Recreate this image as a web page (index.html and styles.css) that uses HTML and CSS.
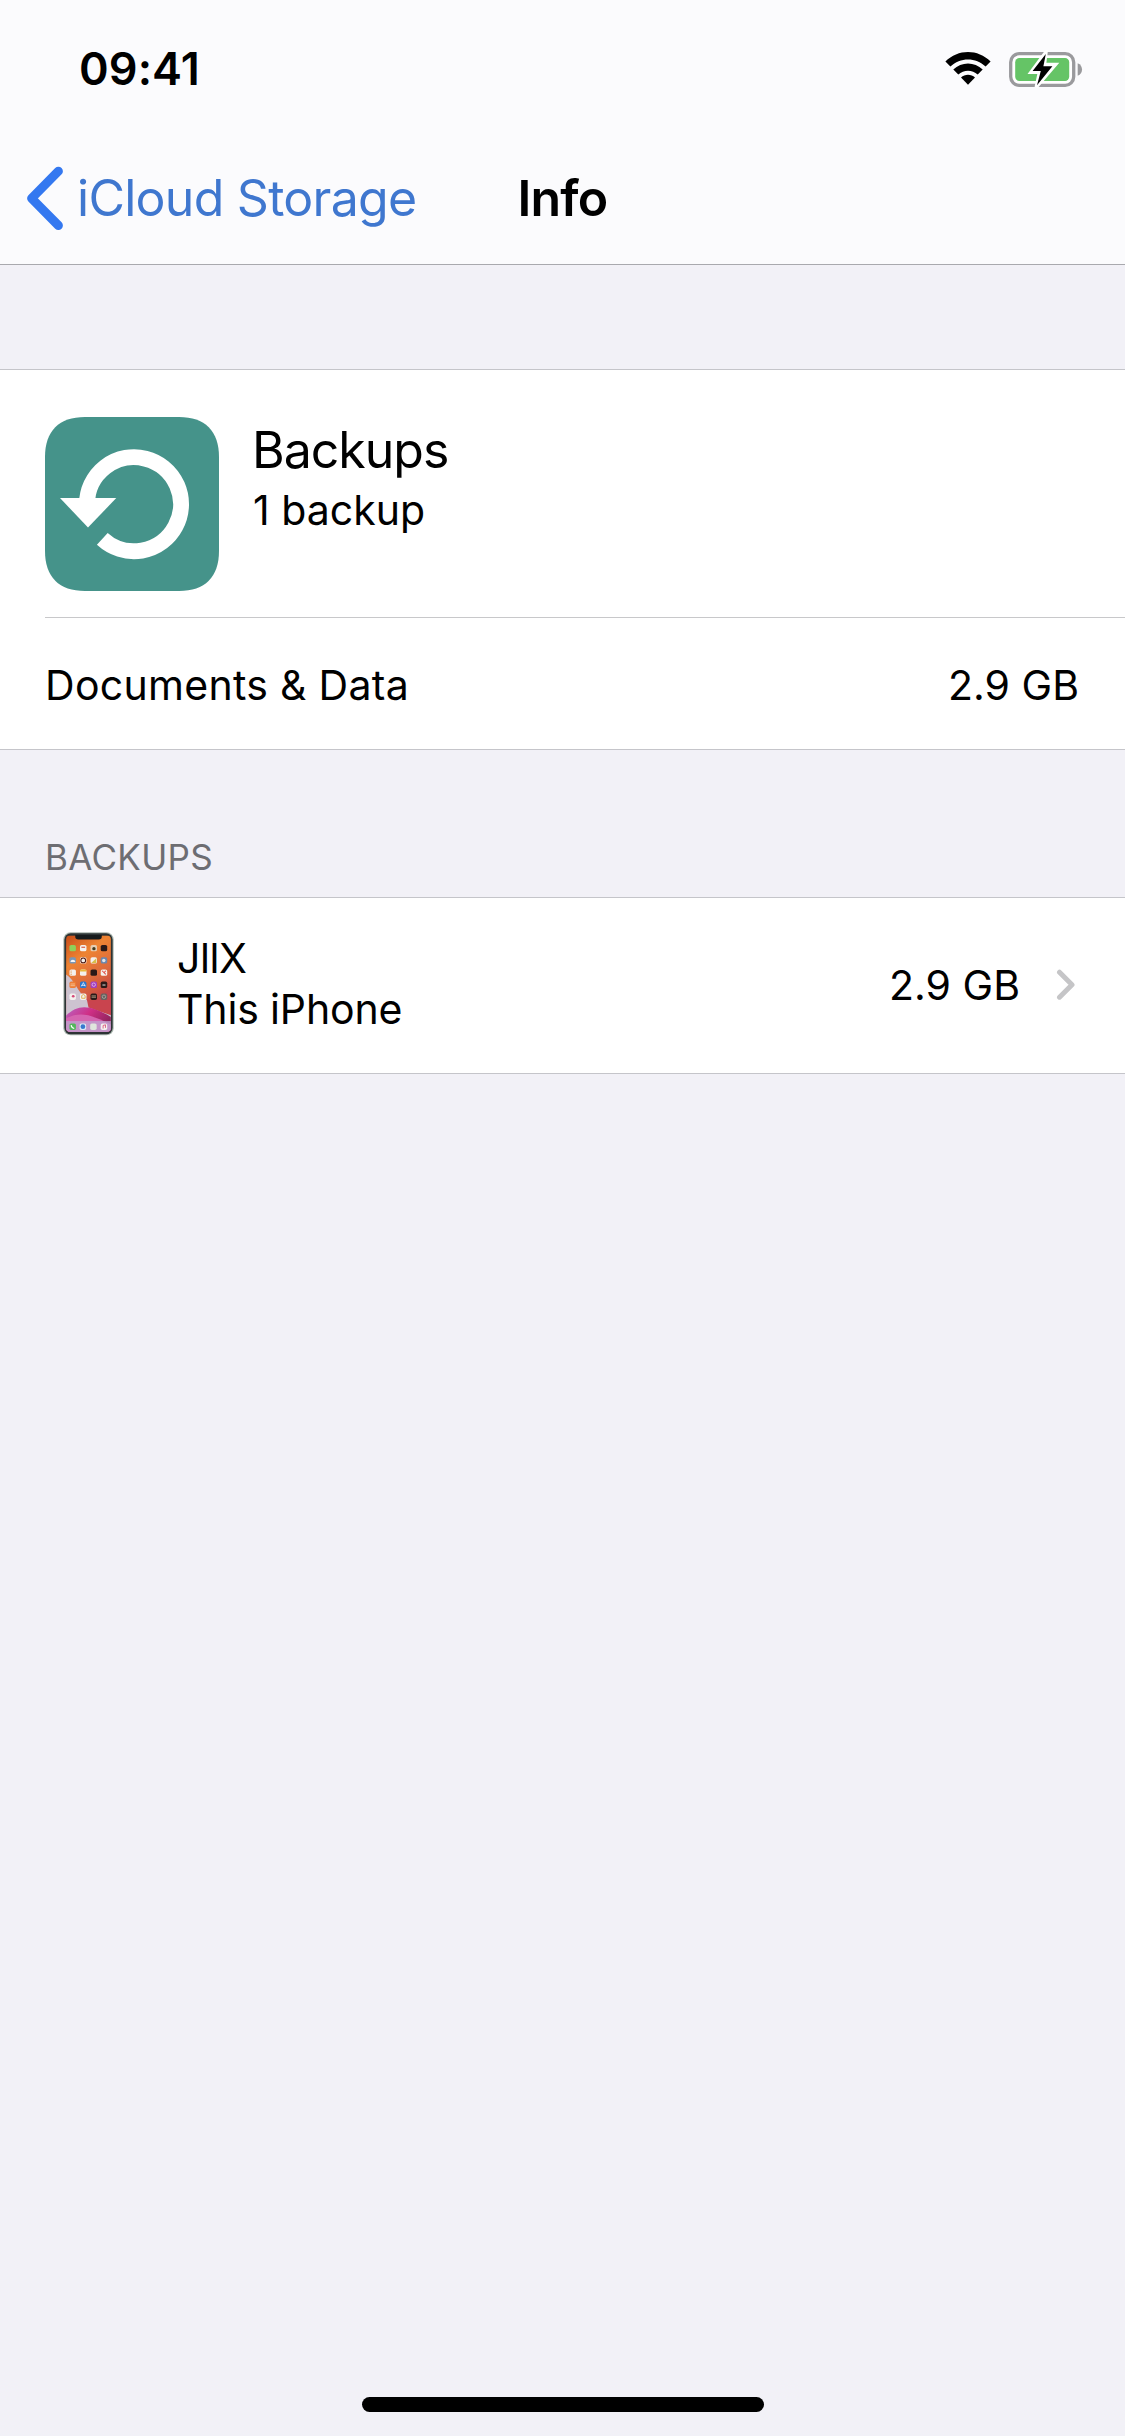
FILE: index.html
```html
<!DOCTYPE html>
<html lang="en">
<head>
<meta charset="utf-8">
<title>Info</title>
<link rel="stylesheet" href="styles.css">
</head>
<body>
<div class="screen">
  <header class="header">
    <div class="status-bar">
      <span class="time">09:41</span>
      <div class="status-icons">
        <svg class="wifi" viewBox="0 0 46 34">
          <path d="M0.4 9.6C13-3.2 33-3.2 45.6 9.6L40.6 14.6C30.8 5 15.2 5 5.4 14.6Z"/>
          <path d="M8.3 17.6C16.5 9.4 29.5 9.4 37.7 17.6L32.7 22.6C27.3 17.4 18.7 17.4 13.3 22.6Z"/>
          <path d="M16 25.4C19.8 21.8 26.2 21.8 30 25.4L23 32.7Z"/>
        </svg>
        <svg class="battery" viewBox="0 0 74 38">
          <rect x="1.7" y="3.7" width="63" height="31.6" rx="8.5" fill="#fff" stroke="#9a9a9d" stroke-width="3.3"/>
          <path d="M68.7 13.2C74.5 15.5 74.5 23.5 68.7 25.8Z" fill="#9a9a9d"/>
          <rect x="6.2" y="8" width="54" height="23" rx="4.2" fill="#65c466"/>
          <path d="M37 2L22 22.2H30.5L27.3 37L46.5 14.6H35.4Z" fill="#fff" stroke="#fff" stroke-width="3.5"/>
          <path d="M36.8 4L23.6 21H31.8L28 35.2L43.4 16.2H34.4Z" fill="#000"/>
        </svg>
      </div>
    </div>
    <nav class="nav-bar">
      <a class="back">
        <svg class="back-icon" viewBox="0 0 38 65"><path d="M32.4 5.2L5.6 32.3L32.4 59.5"/></svg>
        <span>iCloud Storage</span>
      </a>
      <h1 class="title">Info</h1>
      <span></span>
    </nav>
  </header>

  <main class="content">
    <section class="group summary">
      <div class="app-row">
        <svg class="app-icon" viewBox="0 0 174 174">
          <path class="tile" d="M40 0H134C160 0 174 14 174 40V134C174 160 160 174 134 174H40C14 174 0 160 0 134V40C0 14 14 0 40 0Z"/>
          <path class="ring" d="M42 83V87A47 47 0 1 1 57.3 121.9"/>
          <path class="arrow" d="M15 81H71.3L43 110.5Z"/>
        </svg>
        <div class="app-text">
          <span class="app-name">Backups</span>
          <span class="app-count">1 backup</span>
        </div>
      </div>
      <div class="data-row">
        <span class="data-label">Documents &amp; Data</span>
        <span>2.9 GB</span>
      </div>
    </section>

    <h2 class="group-header">BACKUPS</h2>

    <section class="group">
      <div class="device-row">
        <svg class="phone" viewBox="0 0 150 306">
          <defs>
            <linearGradient id="wall" x1="0" y1="0" x2="0.35" y2="1">
              <stop offset="0" stop-color="#c84c18"/>
              <stop offset="0.3" stop-color="#ee8433"/>
              <stop offset="0.58" stop-color="#dd6a3c"/>
              <stop offset="1" stop-color="#b52a50"/>
            </linearGradient>
            <linearGradient id="wave" x1="0" y1="0" x2="1" y2="0.5">
              <stop offset="0" stop-color="#b964c2"/>
              <stop offset="0.5" stop-color="#cf2f86"/>
              <stop offset="1" stop-color="#8f245c"/>
            </linearGradient>
            <clipPath id="glass"><rect x="9" y="10" width="132" height="284" rx="12"/></clipPath>
          </defs>
          <rect x="1" y="1" width="148" height="303" rx="21" fill="#a9b5ae"/>
          <rect x="4" y="4" width="142" height="297" rx="19" fill="#2c3334"/>
          <g clip-path="url(#glass)">
            <rect x="9" y="10" width="132" height="284" fill="url(#wall)"/>
            <path d="M9 125C34 140 42 176 74 203L141 244V294H9Z" fill="#cdc3d0"/>
            <path d="M70 198C100 210 110 190 141 170V245L75 222Z" fill="#c9444e"/>
            <path d="M9 246C45 212 78 214 141 250V294H9Z" fill="url(#wave)"/>
            <path d="M9 254C50 234 80 242 141 272V294H9Z" fill="#d565b0"/>
            <rect x="9" y="262" width="132" height="32" fill="#bfa3d0" opacity="0.8"/>
          </g>
          <path d="M36 9H114V14Q114 22 105 22H45Q36 22 36 14Z" fill="#171b1d"/>
          <g fill="#f4f1ee">
            <rect x="50" y="38" width="19" height="19" rx="5"/><rect x="50" y="110" width="19" height="19" rx="5"/>
            <rect x="19" y="110" width="19" height="19" rx="5"/><rect x="111" y="110" width="19" height="19" rx="5"/>
            <rect x="19" y="181" width="19" height="19" rx="5"/><rect x="50" y="181" width="19" height="19" rx="5"/>
            <rect x="50" y="74" width="19" height="19" rx="5"/><rect x="111" y="269" width="19" height="19" rx="5"/>
            <rect x="81" y="74" width="19" height="19" rx="5"/>
          </g>
          <g fill="#2b1a18">
            <rect x="111" y="38" width="19" height="19" rx="5"/><rect x="81" y="110" width="19" height="19" rx="5"/>
            <rect x="111" y="146" width="19" height="19" rx="5"/><rect x="81" y="181" width="19" height="19" rx="5"/>
            <circle cx="59.500" cy="83.500" r="7" fill="none" stroke="#49140f" stroke-width="3"/>
          </g>
          <rect x="19" y="38" width="19" height="19" rx="5" fill="#8fd05a"/>
          <rect x="81" y="38" width="19" height="19" rx="5" fill="#e6cdb2"/>
          <circle cx="91" cy="49" r="5" fill="#423b20"/>
          <rect x="19" y="74" width="19" height="19" rx="5" fill="#7897b8"/>
          <path d="M22 88C22 80 36 80 36 88Z" fill="#f5f5f5"/>
          <path d="M83 91L98 77V91Z" fill="#d8be49"/>
          <rect x="111" y="74" width="19" height="19" rx="5" fill="#6b87ae"/>
          <circle cx="120" cy="84" r="5" fill="#dfe5ea"/>
          <path d="M54 43H65V47H54Z" fill="#da725d"/>
          <path d="M50 113Q50 110 54 110H65Q69 110 69 114V116H50Z" fill="#eaba3d"/>
          <path d="M22 115H26M22 120H26M22 125H26" stroke="#e78e38" stroke-width="2"/>
          <path d="M115 114L126 125M126 114L120 120" stroke="#e14b42" stroke-width="3"/>
          <rect x="19" y="146" width="19" height="19" rx="5" fill="#ee7e36"/>
          <path d="M22 153H35M22 158H35" stroke="#f9d9b7" stroke-width="2"/>
          <rect x="50" y="146" width="19" height="19" rx="5" fill="#2a78d2"/>
          <path d="M54 160L60 149L65 160M54 157H66" fill="none" stroke="#fff" stroke-width="2"/>
          <rect x="81" y="146" width="19" height="19" rx="5" fill="#a43fc0"/>
          <circle cx="90.500" cy="155" r="5" fill="none" stroke="#eed6f6" stroke-width="2"/>
          <path d="M116 156H125" stroke="#ddd" stroke-width="3"/>
          <circle cx="30" cy="189" r="4" fill="#d44878"/>
          <path d="M55 187L60 184L65 187V195H55Z" fill="none" stroke="#dba73c" stroke-width="2.500"/>
          <path d="M84 188H97M84 192H97" stroke="#d9c0a0" stroke-width="2"/>
          <rect x="111" y="181" width="19" height="19" rx="5" fill="#68625f"/>
          <circle cx="120.500" cy="190.500" r="5" fill="none" stroke="#bcb5af" stroke-width="2"/>
          <rect x="19" y="269" width="19" height="19" rx="5" fill="#53b85c"/>
          <path d="M24 274Q25 282 33 284" fill="none" stroke="#fff" stroke-width="3.500"/>
          <rect x="49" y="269" width="19" height="19" rx="5" fill="#dcebf6"/>
          <circle cx="58.500" cy="278.500" r="7" fill="#3679cf"/>
          <rect x="80" y="269" width="19" height="19" rx="5" fill="#dfe6dd"/>
          <path d="M118 284V275L125 273V282" fill="none" stroke="#dc4b79" stroke-width="2.500"/>
        </svg>
        <div class="device-text">
          <span class="device-name">JllX</span>
          <span class="device-kind">This iPhone</span>
        </div>
        <span class="device-size">2.9 GB</span>
        <svg class="chevron" viewBox="0 0 20 32"><path d="M3.500 3.200L16 15.700L3.500 28.200"/></svg>
      </div>
    </section>
  </main>

  <footer class="footer"><div class="home-indicator"></div></footer>
</div>
</body>
</html>
```
FILE: styles.css
```css
* {
  box-sizing: border-box;
}

body {
  margin: 0;
  font-family: Inter, "Liberation Sans", sans-serif;
  font-size: 41px;
  color: #000;
  background: #f2f1f7;
}

svg {
  display: block;
  flex: none;
}

.screen {
  display: flex;
  flex-direction: column;
  width: 1125px;
  height: 2436px;
}

.header {
  height: 265px;
  background: #fbfbfd;
  border-bottom: 1px solid #a9a9ae;
}

.status-bar {
  display: flex;
  justify-content: space-between;
  align-items: center;
  height: 132px;
  padding: 5px 42px 0 79px;
}

.time {
  font-size: 45px;
  font-weight: 600;
  letter-spacing: 0.1px;
}

.status-icons {
  display: flex;
  align-items: center;
  gap: 18px;
}

.wifi {
  width: 46px;
  height: 34px;
}

.battery {
  width: 74px;
  height: 38px;
}

.nav-bar {
  display: grid;
  grid-template-columns: 1fr auto 1fr;
  align-items: center;
  height: 132px;
  padding: 0 26px;
}

.back {
  display: flex;
  align-items: center;
  gap: 13px;
  font-size: 50px;
  letter-spacing: -0.73px;
  white-space: nowrap;
  color: #3f77cf;
}

.back-icon {
  width: 38px;
  height: 65px;
  fill: none;
  stroke: #3478f0;
  stroke-width: 9;
  stroke-linecap: round;
  stroke-linejoin: round;
}

.title {
  margin: 0;
  font-size: 50px;
  font-weight: 600;
  letter-spacing: -0.8px;
}

.content {
  flex: 1;
  padding-top: 104px;
}

.group {
  background: #fff;
  border-top: 1px solid #c5c5ca;
  border-bottom: 1px solid #c5c5ca;
}

.summary {
  padding-left: 45px;
}

.app-row {
  display: flex;
  gap: 33px;
  height: 248px;
  padding-top: 47px;
  border-bottom: 1px solid #c8c8ca;
}

.app-icon {
  width: 174px;
  height: 174px;
}

.tile {
  fill: #45938a;
}

.ring {
  fill: none;
  stroke: #fff;
  stroke-width: 16;
}

.arrow {
  fill: #fff;
}

.app-text {
  display: flex;
  flex-direction: column;
  padding-top: 3px;
  line-height: 60px;
}

.app-name {
  font-size: 50px;
  letter-spacing: -1px;
}

.app-count {
  padding-left: 1px;
}

.data-row {
  display: flex;
  justify-content: space-between;
  align-items: center;
  height: 131px;
  padding: 3px 46px 0 0;
}

.data-label {
  letter-spacing: 0.3px;
}

.group-header {
  display: flex;
  align-items: flex-end;
  height: 147px;
  margin: 0;
  padding: 0 45px 19px;
  font-size: 35px;
  font-weight: 400;
  line-height: 42px;
  letter-spacing: 0.3px;
  color: #6d6d72;
}

.device-row {
  display: flex;
  align-items: center;
  height: 175px;
  padding: 0 49px 0 63px;
}

.phone {
  width: 51px;
  height: 104px;
  margin-bottom: 4px;
}

.device-text {
  display: flex;
  flex: 1;
  flex-direction: column;
  padding: 0 0 4px 63px;
  line-height: 51px;
}

.device-name {
  letter-spacing: -0.4px;
}

.device-kind {
  letter-spacing: -0.15px;
}

.device-size {
  padding-bottom: 2px;
}

.chevron {
  width: 20px;
  height: 32px;
  margin: 0 0 2px 36px;
  fill: none;
  stroke: #c5c5c7;
  stroke-width: 5;
  stroke-linecap: round;
  stroke-linejoin: round;
}

.footer {
  display: flex;
  justify-content: center;
  padding-bottom: 24px;
}

.home-indicator {
  width: 402px;
  height: 15px;
  border-radius: 8px;
  background: #000;
}
```
